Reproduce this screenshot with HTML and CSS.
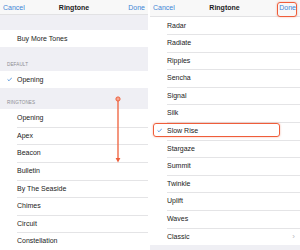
FILE: index.html
```html
<!DOCTYPE html>
<html>
<head>
<meta charset="utf-8">
<title>Ringtone</title>
<link rel="stylesheet" href="styles.css">
</head>
<body>
<!-- 两个截图并排 -->
<div class="screens">
    <!-- 左边：铃声列表顶部 -->
    <div class="panel panel-left">
        <div class="nav">
            <span class="nav-btn">Cancel</span>
            <span class="nav-title">Ringtone</span>
            <span class="nav-btn nav-done">Done</span>
        </div>
        <div class="gap gap-top"></div>
        <ul class="group">
            <li class="row">Buy More Tones</li>
        </ul>
        <div class="gap section section-first">DEFAULT</div>
        <ul class="group">
            <li class="row checked">
                <svg class="check" viewBox="0 0 6 5"><polyline points="0.6,2.7 2.2,4.2 5.4,0.7"/></svg>
                Opening
            </li>
        </ul>
        <div class="gap section">RINGTONES</div>
        <ul class="group">
            <li class="row">Opening</li>
            <li class="row">Apex</li>
            <li class="row">Beacon</li>
            <li class="row">Bulletin</li>
            <li class="row">By The Seaside</li>
            <li class="row">Chimes</li>
            <li class="row">Circuit</li>
            <li class="row">Constellation</li>
        </ul>
        <!-- 滚动提示箭头 -->
        <svg class="scroll-arrow" viewBox="0 0 10 70">
            <line x1="5" y1="5" x2="5" y2="64"/>
            <circle cx="5" cy="4" r="2.1"/>
            <polygon points="2.6,63 7.4,63 5,67.5"/>
        </svg>
    </div>
    <div class="divider"></div>
    <!-- 右边：列表滚动到中间 -->
    <div class="panel panel-right">
        <div class="nav">
            <span class="nav-btn">Cancel</span>
            <span class="nav-title">Ringtone</span>
            <span class="nav-btn nav-done">Done</span>
        </div>
        <ul class="group">
            <li class="row">Radar</li>
            <li class="row">Radiate</li>
            <li class="row">Ripples</li>
            <li class="row">Sencha</li>
            <li class="row">Signal</li>
            <li class="row">Silk</li>
            <li class="row checked">
                <svg class="check" viewBox="0 0 6 5"><polyline points="0.6,2.7 2.2,4.2 5.4,0.7"/></svg>
                Slow Rise
            </li>
            <li class="row">Stargaze</li>
            <li class="row">Summit</li>
            <li class="row">Twinkle</li>
            <li class="row">Uplift</li>
            <li class="row">Waves</li>
            <li class="row more">Classic <span class="chevron">&#8250;</span></li>
        </ul>
        <div class="gap gap-bottom"></div>
        <!-- 高亮框 -->
        <div class="mark mark-done"></div>
        <div class="mark mark-row"></div>
    </div>
</div>
</body>
</html>
```
FILE: styles.css
```css
* {
    margin: 0;
    padding: 0;
}
body {
    background-color: #fff;
    font-family: "Liberation Sans", Arial, sans-serif;
    font-size: 7px;
    color: #222;
}
.screens {
    display: flex;
    width: 300px;
    height: 250px;
    overflow: hidden;
}
.panel {
    position: relative;
    display: flex;
    flex-direction: column;
    background-color: #efeff4;
}
.panel-left {
    width: 148px;
}
.panel-right {
    width: 150px;
    background-color: #fff;
}
.divider {
    width: 2px;
    background-color: #fff;
}
/* 导航栏 */
.nav {
    display: grid;
    grid-template-columns: 1fr auto 1fr;
    align-items: center;
    height: 15.5px;
    padding: 0 3px;
    background-color: #f8f8f8;
    border-bottom: 1px solid #e2e2e4;
}
.panel-right .nav {
    padding: 0 4px 0 3px;
}
.nav-btn {
    color: #3d85d6;
}
.nav-title {
    font-weight: bold;
    color: #1c1c1c;
}
.nav-done {
    justify-self: end;
}
/* 分组 */
.gap {
    background-color: #efeff4;
}
.gap-top {
    height: 16px;
}
.gap-bottom {
    flex: 1;
}
.section {
    height: 22.5px;
    display: flex;
    align-items: flex-end;
    padding: 0 0 4px 7px;
    box-sizing: border-box;
    font-size: 4.6px;
    color: #8d8d92;
    letter-spacing: 0.1px;
}
.section-first {
    height: 25.5px;
}
.group {
    list-style: none;
    background-color: #fff;
}
.row {
    position: relative;
    height: 17.6px;
    line-height: 17.6px;
    padding-left: 17px;
    box-sizing: border-box;
    white-space: nowrap;
}
.row + .row::before {
    content: "";
    position: absolute;
    left: 17px;
    right: 0;
    top: 0;
    border-top: 1px solid #e4e4e6;
}
.check {
    position: absolute;
    left: 6.5px;
    top: 6px;
    width: 5.5px;
    height: 4.5px;
    fill: none;
    stroke: #3d85d6;
    stroke-width: 0.9;
}
.chevron {
    position: absolute;
    right: 5px;
    top: 0;
    color: #b8b8bc;
    font-size: 8px;
}
/* 橙色标注 */
.scroll-arrow {
    position: absolute;
    left: 113px;
    top: 95px;
    width: 10px;
    height: 70px;
}
.scroll-arrow line {
    stroke: #f06a48;
    stroke-width: 1.4;
}
.scroll-arrow circle {
    fill: #f7a48e;
    stroke: #ee5f3c;
    stroke-width: 1;
}
.scroll-arrow polygon {
    fill: #ee5f3c;
}
.mark {
    position: absolute;
    border: 1.5px solid #ef5d3a;
    border-radius: 3px;
    box-shadow: 0 0 2px rgba(239, 93, 58, 0.5);
}
.mark-done {
    left: 126.5px;
    top: 1.5px;
    width: 18px;
    height: 13px;
}
.mark-row {
    left: 2.5px;
    top: 122.5px;
    width: 125px;
    height: 12.5px;
}
```
